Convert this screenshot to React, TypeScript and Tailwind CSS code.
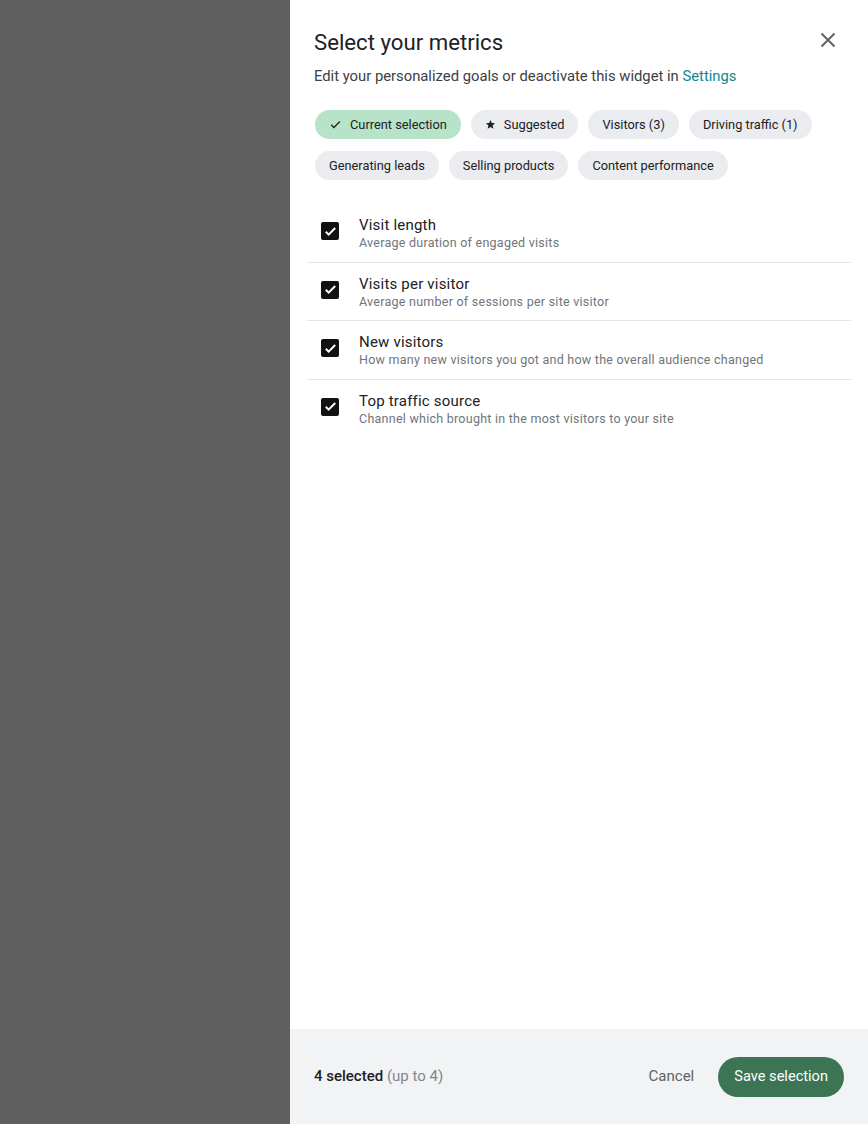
import React from "react";

const chips = [
  { label: "Current selection", active: true, icon: "check" },
  { label: "Suggested", icon: "star" },
  { label: "Visitors (3)" },
  { label: "Driving traffic (1)" },
  { label: "Generating leads" },
  { label: "Selling products" },
  { label: "Content performance" },
];

const metrics = [
  { title: "Visit length", desc: "Average duration of engaged visits" },
  { title: "Visits per visitor", desc: "Average number of sessions per site visitor" },
  { title: "New visitors", desc: "How many new visitors you got and how the overall audience changed" },
  { title: "Top traffic source", desc: "Channel which brought in the most visitors to your site" },
];

function Chip({ label, active, icon }: { label: string; active?: boolean; icon?: string }) {
  return (
    <div
      className={`flex h-[29px] items-center gap-[8px] rounded-full px-[14px] text-[12.8px] text-[#202124] ${
        active ? "bg-[#b7e4c9]" : "bg-[#eaecef]"
      }`}
    >
      {icon === "check" && (
        <svg width="13" height="13" viewBox="0 0 24 24" fill="none" stroke="#202124" strokeWidth="2.4">
          <path d="M4 12.5l5 5L20 6.5" />
        </svg>
      )}
      {icon === "star" && (
        <svg width="11" height="11" viewBox="0 0 24 24" fill="#202124">
          <path d="M12 2l2.9 6.9 7.1.6-5.4 4.7 1.6 7.1L12 17.5 5.8 21.3l1.6-7.1L2 9.5l7.1-.6z" />
        </svg>
      )}
      <span>{label}</span>
    </div>
  );
}

function Checkbox() {
  return (
    <div className="mt-[7px] flex h-[18px] w-[18px] shrink-0 items-center justify-center rounded-[2px] bg-[#111]">
      <svg width="15" height="15" viewBox="0 0 24 24" fill="none" stroke="white" strokeWidth="3.2">
        <path d="M4.5 12.5l4.5 4.5L19.5 6.5" />
      </svg>
    </div>
  );
}

export default function App() {
  return (
    <div
      className="flex h-[1124px] w-[868px]"
      style={{ fontFamily: "Roboto, 'Noto Sans', sans-serif" }}
    >
      <div className="w-[290px] shrink-0 bg-[#5f5f5f]" />
      <div className="flex flex-1 flex-col bg-white">
        <div className="flex-1">
          <div className="flex items-start justify-between pl-[24px] pr-[28px] pt-[28px]">
            <h1 className="text-[22.2px] leading-[28px] text-[#202124]">Select your metrics</h1>
            <svg width="24" height="24" viewBox="0 0 24 24" fill="none" stroke="#5f6368" strokeWidth="2">
              <path d="M5.5 5.5l13 13M18.5 5.5l-13 13" />
            </svg>
          </div>
          <p className="mt-[10px] pl-[24px] text-[14.8px] leading-[20px] text-[#3c4043]">
            Edit your personalized goals or deactivate this widget in{" "}
            <span className="text-[#12868a]">Settings</span>
          </p>
          <div className="mt-[24px] flex flex-wrap gap-x-[10px] gap-y-[12px] pl-[25px] pr-[24px]">
            {chips.map((c) => (
              <Chip key={c.label} {...c} />
            ))}
          </div>
          <div className="mt-[24px] ml-[17px] mr-[17px]">
            {metrics.map((m, i) => (
              <div
                key={m.title}
                className={`flex items-start gap-[20px] px-[14px] pt-[11px] pb-[10.5px] ${
                  i < metrics.length - 1 ? "border-b border-[#e3e5e8]" : ""
                }`}
              >
                <Checkbox />
                <div className="flex flex-col">
                  <span className="text-[15px] leading-[20px] tracking-[0.2px] text-[#202124]">{m.title}</span>
                  <span className="text-[12.5px] leading-[16px] tracking-[0.25px] text-[#70757a]">{m.desc}</span>
                </div>
              </div>
            ))}
          </div>
        </div>
        <div className="flex h-[95px] items-center justify-between bg-[#f2f3f5] pl-[24px] pr-[24px]">
          <div className="text-[15px] text-[#202124]">
            <span className="font-medium">4 selected</span>{" "}
            <span className="text-[#80868b]">(up to 4)</span>
          </div>
          <div className="flex items-center gap-[24px]">
            <span className="text-[15px] text-[#5f6368]">Cancel</span>
            <div className="flex h-[40px] items-center rounded-full bg-[#3c7553] px-[16px] text-[14.6px] text-white">
              Save selection
            </div>
          </div>
        </div>
      </div>
    </div>
  );
}
